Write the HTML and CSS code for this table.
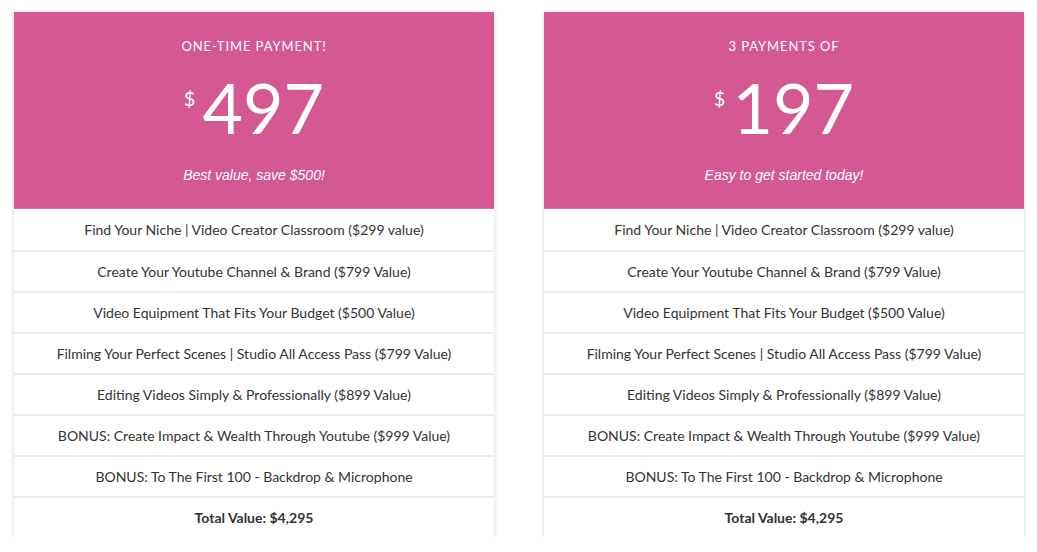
FILE: index.html
```html
<!DOCTYPE html>
<html>
<head>
<meta charset="utf-8">
<link rel="stylesheet" href="styles.css">
</head>
<body>
<div class="plans">
  <div class="card">
    <div class="head">
      <div class="label">ONE-TIME PAYMENT!</div>
      <div class="price"><span class="cur">$</span><span class="amt">497</span></div>
      <div class="note">Best value, save $500!</div>
    </div>
    <ul class="rows">
      <li>Find Your Niche | Video Creator Classroom ($299 value)</li>
      <li>Create Your Youtube Channel &amp; Brand ($799 Value)</li>
      <li>Video Equipment That Fits Your Budget ($500 Value)</li>
      <li>Filming Your Perfect Scenes | Studio All Access Pass ($799 Value)</li>
      <li>Editing Videos Simply &amp; Professionally ($899 Value)</li>
      <li>BONUS: Create Impact &amp; Wealth Through Youtube ($999 Value)</li>
      <li>BONUS: To The First 100 - Backdrop &amp; Microphone</li>
      <li class="total">Total Value: $4,295</li>
    </ul>
  </div>
  <div class="card">
    <div class="head">
      <div class="label">3 PAYMENTS OF</div>
      <div class="price"><span class="cur">$</span><span class="amt">197</span></div>
      <div class="note">Easy to get started today!</div>
    </div>
    <ul class="rows">
      <li>Find Your Niche | Video Creator Classroom ($299 value)</li>
      <li>Create Your Youtube Channel &amp; Brand ($799 Value)</li>
      <li>Video Equipment That Fits Your Budget ($500 Value)</li>
      <li>Filming Your Perfect Scenes | Studio All Access Pass ($799 Value)</li>
      <li>Editing Videos Simply &amp; Professionally ($899 Value)</li>
      <li>BONUS: Create Impact &amp; Wealth Through Youtube ($999 Value)</li>
      <li>BONUS: To The First 100 - Backdrop &amp; Microphone</li>
      <li class="total">Total Value: $4,295</li>
    </ul>
  </div>
</div>
</body>
</html>
```
FILE: styles.css
```css
html, body {
  margin: 0;
  padding: 0;
  background: #fff;
}
.plans {
  display: flex;
  gap: 50px;
  padding: 12px 13px 0 14px;
}
.card {
  width: 480px;
  background: #fff;
  box-shadow: 0 1px 4px rgba(0, 0, 0, 0.18);
}
.head {
  background: #d45891;
  color: #fff;
  height: 197px;
  box-sizing: border-box;
  border-bottom: 1px solid #e070a3;
  text-align: center;
  padding-top: 27px;
}
.label {
  font-family: Lato, "Liberation Sans", sans-serif;
  font-size: 13px;
  letter-spacing: 0.9px;
  line-height: 14px;
}
.price {
  margin-top: 18px;
  display: flex;
  justify-content: center;
  align-items: flex-start;
  font-family: Lato, "Liberation Sans", sans-serif;
  height: 74px;
}
.cur {
  font-size: 20px;
  line-height: 20px;
  margin-top: 17px;
  margin-right: 7px;
  font-weight: 400;
}
.amt {
  font-size: 70px;
  line-height: 72px;
  font-weight: 400;
}
.note {
  margin-top: 21px;
  font-family: "Liberation Sans", Arial, sans-serif;
  font-style: italic;
  font-size: 14px;
  line-height: 18px;
}
.rows {
  list-style: none;
  margin: 0;
  padding: 0;
}
.rows li {
  height: 41px;
  box-sizing: border-box;
  display: flex;
  align-items: center;
  justify-content: center;
  font-family: Lato, "Liberation Sans", sans-serif;
  font-size: 14px;
  color: #333;
  border-top: 2px solid #ececec;
}
.rows li:first-child {
  border-top: none;
}
.rows li.total {
  font-weight: 700;
}
```
